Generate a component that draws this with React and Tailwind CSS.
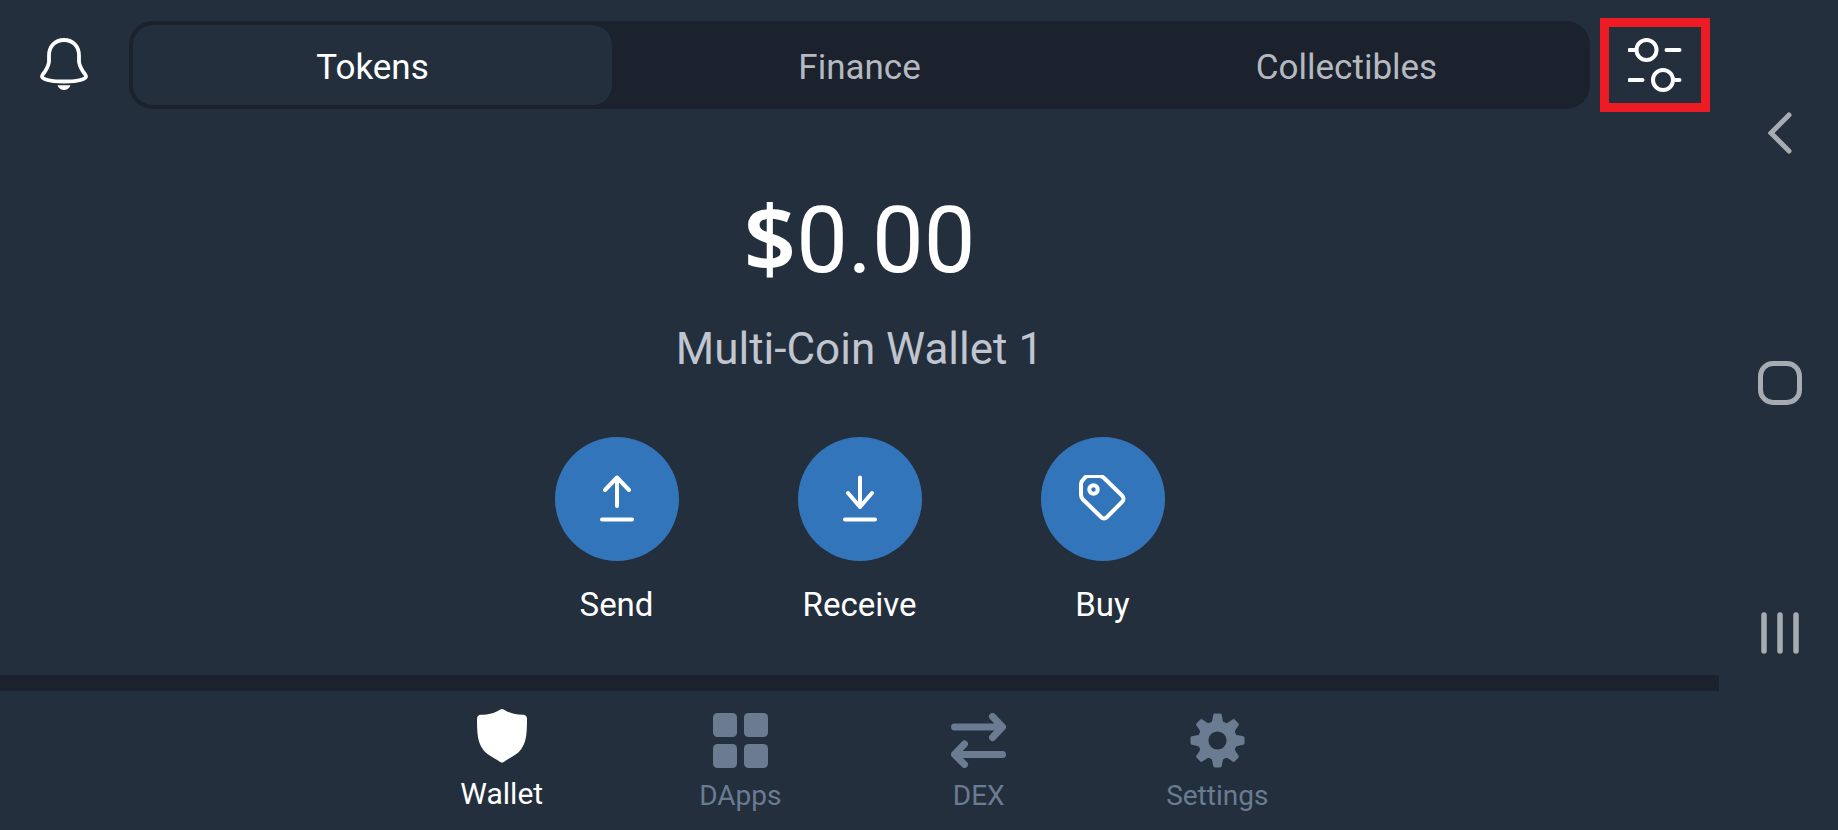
import React, { useState } from "react";

const TABS = ["Tokens", "Finance", "Collectibles"];

const BellIcon = () => (
    <svg width="48" height="52" viewBox="0 0 48 52" fill="none" aria-hidden="true">
        <path d="M24 2C14.500 2 9 9 9 17.500V23C9 27 7.500 29.500 5 33.500C3.200 36 2 36.500 2 38.300C2 42 12.500 43.500 24 43.500S46 42 46 38.300C46 36.500 44.800 36 43 33.500C40.500 29.500 39 27 39 23V17.500C39 9 33.500 2 24 2Z" stroke="currentColor" strokeWidth="3.800" />
        <path d="M17.500 47.200H30.500C29.500 50.200 27 52 24 52S18.500 50.200 17.500 47.200Z" fill="currentColor" />
    </svg>
);

const FilterIcon = () => (
    <svg width="54" height="54" viewBox="0.500 0 54 54" fill="none" stroke="currentColor" strokeWidth="4" strokeLinecap="round" aria-hidden="true">
        <circle cx="19" cy="12" r="10" />
        <path d="M2 12H8M39 12H52" />
        <circle cx="35.500" cy="42" r="10" />
        <path d="M2 42H15M46 42H52" />
    </svg>
);

const SendIcon = () => (
    <svg width="34" height="48" viewBox="0 0 34 48" fill="none" stroke="currentColor" strokeWidth="4" strokeLinecap="round" strokeLinejoin="round" aria-hidden="true">
        <path d="M17 31V2.500M5 15L17 2.500L29 15M2 44.500H32" />
    </svg>
);

const ReceiveIcon = () => (
    <svg width="34" height="48" viewBox="0 0 34 48" fill="none" stroke="currentColor" strokeWidth="4" strokeLinecap="round" strokeLinejoin="round" aria-hidden="true">
        <path d="M17 2.500V32M5 18L17 32L29 18M2 44.500H32" />
    </svg>
);

const BuyIcon = () => (
    <svg width="48" height="48" viewBox="1 2 48 48" fill="none" stroke="currentColor" strokeWidth="4" strokeLinejoin="round" aria-hidden="true">
        <path d="M10 3H21C23 3 24.500 3.500 26 5L44 22.500C46 24.500 46 27 44 29L29 44C27 46 25 46 23 44L5 26.500C4 25.500 3 24 3 22V11C3 9.500 3.500 8.500 4.500 7.500L7 4.500C8 3.500 8.500 3 10 3Z" />
        <circle cx="15.500" cy="16.500" r="4.200" />
    </svg>
);

const WalletIcon = () => (
    <svg width="50" height="54" viewBox="0 0 50 54" fill="currentColor" aria-hidden="true">
        <path d="M23 .7Q25-.5 27 .7C33 4.300 38 5.600 46 5.800Q50 6 50 10C50 24 49.500 33 44 40.500C40.500 45.500 35 47.500 26.800 53Q25 54.200 23.200 53C15 47.500 9.500 45.500 6 40.500C.5 33 0 24 0 10Q0 6 4 5.800C12 5.600 17 4.300 23 .7Z" />
    </svg>
);

const DAppsIcon = () => (
    <svg width="55" height="55" viewBox="0 0 55 55" fill="currentColor" aria-hidden="true">
        <rect x="0" y="0" width="24" height="24" rx="4.500" />
        <rect x="31" y="0" width="24" height="24" rx="4.500" />
        <rect x="0" y="31" width="24" height="24" rx="4.500" />
        <rect x="31" y="31" width="24" height="24" rx="4.500" />
    </svg>
);

const DexIcon = () => (
    <svg width="55" height="55" viewBox="0 0 55 55" fill="none" stroke="currentColor" strokeWidth="7" strokeLinecap="round" strokeLinejoin="round" aria-hidden="true">
        <path d="M3.500 14H51M41.500 3.500L51.500 14L41.500 24.500" />
        <path d="M51.500 41.500H4M13.500 31L3.500 41.500L13.500 51.500" />
    </svg>
);

const TEETH = [0, 45, 90, 135, 180, 225, 270, 315];

const SettingsIcon = () => (
    <svg width="55" height="55" viewBox="-28 -28 56 56" fill="currentColor" aria-hidden="true">
        <circle r="14.500" fill="none" stroke="currentColor" strokeWidth="10.500" />
        {TEETH.map((angle) => (
            <path key={angle} transform={`rotate(${angle})`} d="M-8-17C-6-18-5.500-19.500-5-22.500L-4.300-26Q-4-27.500-2.500-27.500H2.500Q4-27.500 4.300-26L5-22.500C5.500-19.500 6-18 8-17Z" />
        ))}
    </svg>
);

const ACTIONS = [
    { label: "Send", Icon: SendIcon },
    { label: "Receive", Icon: ReceiveIcon },
    { label: "Buy", Icon: BuyIcon },
];

const NAV_ITEMS = [
    { label: "Wallet", Icon: WalletIcon },
    { label: "DApps", Icon: DAppsIcon },
    { label: "DEX", Icon: DexIcon },
    { label: "Settings", Icon: SettingsIcon },
];

function TopBar() {
    const [tab, setTab] = useState("Tokens");

    return (
        <header className="flex items-center pt-[18px] pr-[9px] pl-10">
            <button aria-label="Notifications" className="mt-5 mr-[41px] self-start">
                <BellIcon />
            </button>
            <div role="tablist" className="flex h-[88px] flex-1 rounded-[24px] bg-[#1b222d]">
                {TABS.map((name) => (
                    <button
                        key={name}
                        role="tab"
                        aria-selected={tab === name}
                        onClick={() => setTab(name)}
                        className={`m-1 flex-1 rounded-[20px] pt-1.5 text-[35px] leading-[40px] ${
                            tab === name ? "bg-[#232f3d] text-white" : "text-[#b5b9c0]"
                        }`}
                    >
                        {name}
                    </button>
                ))}
            </div>
            <button aria-label="Manage tokens" className="ml-[10px] flex h-[94px] w-[110px] items-center justify-center border-[9px] border-[#ed1c24]">
                <FilterIcon />
            </button>
        </header>
    );
}

function Balance() {
    return (
        <main className="flex flex-1 flex-col items-center">
            <h1 className="mt-[73px] text-[92px] leading-[112px]">
                <span className="font-['Noto_Sans',sans-serif] leading-none font-semibold">$</span>0.00
            </h1>
            <p className="mt-[28px] text-[44px] leading-[48px] text-[#c0c5cf]">Multi-Coin Wallet 1</p>
            <div className="mt-[64px] flex gap-[119px]">
                {ACTIONS.map(({ label, Icon }) => (
                    <button key={label} className="flex w-[124px] flex-col items-center gap-6">
                        <span className="flex h-[124px] w-[124px] items-center justify-center rounded-full bg-[#3375bb]">
                            <Icon />
                        </span>
                        <span className="text-[33px] leading-[40px]">{label}</span>
                    </button>
                ))}
            </div>
        </main>
    );
}

function BottomNav() {
    const [page, setPage] = useState("Wallet");

    return (
        <nav className="flex h-[155px] justify-center border-t-[16px] border-[#1b222d]">
            <div className="flex w-full max-w-[954px]">
                {NAV_ITEMS.map(({ label, Icon }) => (
                    <button
                        key={label}
                        onClick={() => setPage(label)}
                        className={`flex flex-1 flex-col items-center ${
                            page === label
                                ? "gap-[11px] pt-[18px] text-[30px] leading-[40px] text-white"
                                : "gap-2 pt-[22px] text-[28px] leading-[40px] text-[#6b7b91]"
                        }`}
                    >
                        <Icon />
                        <span>{label}</span>
                    </button>
                ))}
            </div>
        </nav>
    );
}

function SystemBar() {
    return (
        <aside className="flex w-[119px] flex-col items-center pt-2 pb-[72px] pl-0.5 text-[#a7acb3]">
            <button aria-label="Back" className="flex flex-1 items-center">
                <svg width="24" height="42" viewBox="0 0 24 42" fill="none" stroke="currentColor" strokeWidth="5" strokeLinecap="round" aria-hidden="true">
                    <path d="M21 3L3 21L21 39" />
                </svg>
            </button>
            <button aria-label="Home" className="flex flex-1 items-center">
                <svg width="44" height="44" viewBox="0 0 44 44" fill="none" stroke="currentColor" strokeWidth="5" aria-hidden="true">
                    <rect x="2.500" y="2.500" width="39" height="39" rx="12.500" />
                </svg>
            </button>
            <button aria-label="Recent apps" className="flex flex-1 items-center">
                <svg width="40" height="42" viewBox="0 0 40 42" fill="none" stroke="currentColor" strokeWidth="5.500" strokeLinecap="round" aria-hidden="true">
                    <path d="M4 3V39M20 3V39M36 3V39" />
                </svg>
            </button>
        </aside>
    );
}

export default function App() {
    return (
        <div className="flex min-h-screen bg-[#232f3d] font-['Roboto',sans-serif] text-white">
            <div className="flex flex-1 flex-col">
                <TopBar />
                <Balance />
                <BottomNav />
            </div>
            <SystemBar />
        </div>
    );
}
